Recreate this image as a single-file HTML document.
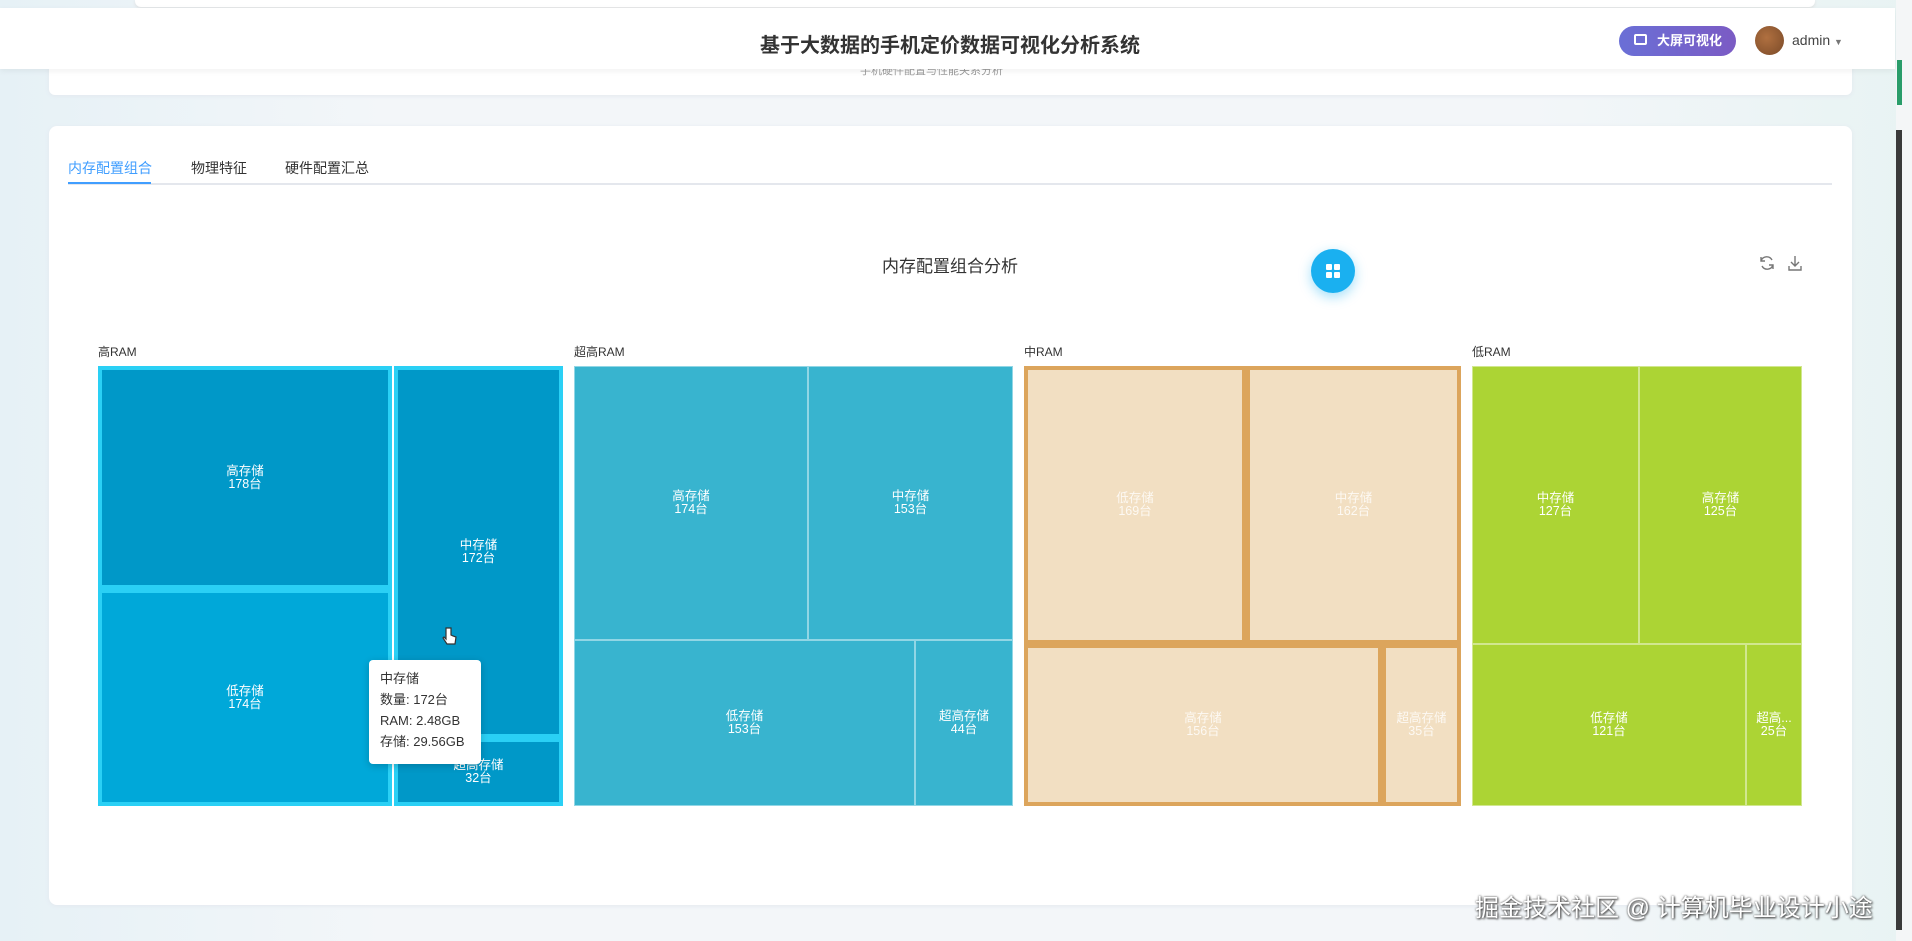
<!DOCTYPE html><html><head><meta charset="utf-8"><style>
*{margin:0;padding:0;box-sizing:border-box}
body{width:1912px;height:941px;overflow:hidden;background:linear-gradient(90deg,#e6f1f6,#f3f6f9 20%,#f3f6f9 80%,#e8f3f3);font-family:"Liberation Sans","Noto Sans CJK SC",sans-serif;position:relative}
.a{position:absolute}
.c{position:absolute;display:flex;align-items:center;justify-content:center;flex-direction:column;color:#fff;font-size:12.5px;line-height:13px;text-align:center}
.h .c{background:#0098c8;border:4px solid #2ad0f5}
.s .c{background:#38b4cf;border:1px solid rgba(255,255,255,.45)}
.m .c{background:#f2dfc2;border:4px solid #dca55c;color:rgba(255,255,255,.8)}
.l .c{background:#acd434;border:1px solid rgba(255,255,255,.45)}
.gl{position:absolute;top:343px;font-size:12px;color:#333}
</style></head><body>
<div class="a" style="left:135px;top:0;width:1680px;height:7px;background:#fff;border-radius:0 0 6px 6px;box-shadow:0 1px 3px #ddd"></div>
<div class="a" style="left:49px;top:60px;width:1803px;height:35px;background:#fff;border-radius:6px;box-shadow:0 1px 4px #e3e8ee"></div>
<div class="a" style="left:860px;top:62px;font-size:11px;color:#999">手机硬件配置与性能关系分析</div>
<div class="a" style="left:0;top:8px;width:1895px;height:61px;background:#fff;box-shadow:0 2px 6px rgba(0,0,0,.06)"></div>
<div class="a" style="left:0;top:29px;width:1900px;text-align:center;font-size:20px;font-weight:bold;color:#333">基于大数据的手机定价数据可视化分析系统</div>
<div class="a" style="left:1619px;top:26px;width:117px;height:30px;border-radius:15px;background:linear-gradient(90deg,#6a6fd6,#7b5bc4);color:#fff;font-size:13px;font-weight:bold;line-height:30px;padding-left:38px">大屏可视化</div>
<div class="a" style="left:1634px;top:34px;width:13px;height:11px;border:2px solid #fff;border-radius:2px"></div>
<div class="a" style="left:1755px;top:26px;width:29px;height:29px;border-radius:50%;background:radial-gradient(circle at 40% 40%,#b07040,#7a4a28);"></div>
<div class="a" style="left:1792px;top:32px;font-size:14px;color:#444">admin <span style="font-size:9px;color:#777">▼</span></div>
<div class="a" style="left:1896px;top:0;width:16px;height:941px;background:#f4f6f7"></div>
<div class="a" style="left:1897px;top:60px;width:5px;height:45px;background:#2a9d6a"></div>
<div class="a" style="left:1896px;top:130px;width:6px;height:800px;background:#3a3a3a"></div>
<div class="a" style="left:49px;top:126px;width:1803px;height:779px;background:#fff;border-radius:8px;box-shadow:0 1px 4px #e3e8ee"></div>
<div class="a" style="left:68px;top:158px;font-size:14px;color:#409eff">内存配置组合</div>
<div class="a" style="left:191px;top:158px;font-size:14px;color:#333">物理特征</div>
<div class="a" style="left:285px;top:158px;font-size:14px;color:#333">硬件配置汇总</div>
<div class="a" style="left:68px;top:183px;width:1764px;height:2px;background:#e4e7ed"></div>
<div class="a" style="left:68px;top:182px;width:83px;height:2px;background:#409eff"></div>
<div class="a" style="left:0;top:252px;width:1900px;text-align:center;font-size:17px;color:#333">内存配置组合分析</div>
<div class="a" style="left:1311px;top:249px;width:44px;height:44px;border-radius:50%;background:#1ab0f0;box-shadow:0 4px 12px rgba(26,176,240,.4)"></div>
<div class="a" style="left:1326px;top:264px;width:6px;height:6px;background:#fff;box-shadow:8px 0 #fff,0 8px #fff,8px 8px #fff;border-radius:1px"></div>
<svg class="a" style="left:1758px;top:254px" width="50" height="18" viewBox="0 0 50 18" fill="none" stroke="#777" stroke-width="1.4"><path d="M14 6a6 6 0 0 0-11 1M3 3v4h4M4 12a6 6 0 0 0 11-1M15 15v-4h-4"/><path d="M37 2v10M33 8l4 4 4-4M31 12v4h12v-4"/></svg>
<div class="gl" style="left:98px">高RAM</div><div class="gl" style="left:574px">超高RAM</div><div class="gl" style="left:1024px">中RAM</div><div class="gl" style="left:1472px">低RAM</div>
<div class="h">
<div class="c" style="left:98px;top:366px;width:294px;height:223px">高存储<br>178台</div>
<div class="c" style="left:98px;top:589px;width:294px;height:217px;background:#00a8d9">低存储<br>174台</div>
<div class="c" style="left:394px;top:366px;width:169px;height:372px">中存储<br>172台</div>
<div class="c" style="left:394px;top:738px;width:169px;height:68px">超高存储<br>32台</div>
</div>
<div class="s">
<div class="c" style="left:574px;top:366px;width:234px;height:274px">高存储<br>174台</div>
<div class="c" style="left:808px;top:366px;width:205px;height:274px">中存储<br>153台</div>
<div class="c" style="left:574px;top:640px;width:341px;height:166px">低存储<br>153台</div>
<div class="c" style="left:915px;top:640px;width:98px;height:166px">超高存储<br>44台</div>
</div>
<div class="m">
<div class="c" style="left:1024px;top:366px;width:222px;height:278px">低存储<br>169台</div>
<div class="c" style="left:1246px;top:366px;width:215px;height:278px">中存储<br>162台</div>
<div class="c" style="left:1024px;top:644px;width:358px;height:162px">高存储<br>156台</div>
<div class="c" style="left:1382px;top:644px;width:79px;height:162px">超高存储<br>35台</div>
</div>
<div class="l">
<div class="c" style="left:1472px;top:366px;width:167px;height:278px">中存储<br>127台</div>
<div class="c" style="left:1639px;top:366px;width:163px;height:278px">高存储<br>125台</div>
<div class="c" style="left:1472px;top:644px;width:274px;height:162px">低存储<br>121台</div>
<div class="c" style="left:1746px;top:644px;width:56px;height:162px">超高...<br>25台</div>
</div>
<div class="a" style="left:369px;top:660px;width:112px;height:104px;background:#fff;border-radius:4px;box-shadow:0 2px 8px rgba(0,0,0,.2);padding:8px 11px;font-size:13px;line-height:21px;color:#333">中存储<br>数量: 172台<br>RAM: 2.48GB<br>存储: 29.56GB</div>
<svg class="a" style="left:442px;top:627px" width="16" height="20" viewBox="0 0 16 20"><path d="M4 1v11l-2-2-1 1 4 6h8l1-7-3-1-2-1V1z" fill="#fff" stroke="#333" stroke-width="1.2"/></svg>
<div class="a" style="left:1475px;top:888px;font-size:24px;color:#fff;text-shadow:0 0 2px #555,1px 1px 2px #333">掘金技术社区 @ 计算机毕业设计小途</div>
</body></html>
